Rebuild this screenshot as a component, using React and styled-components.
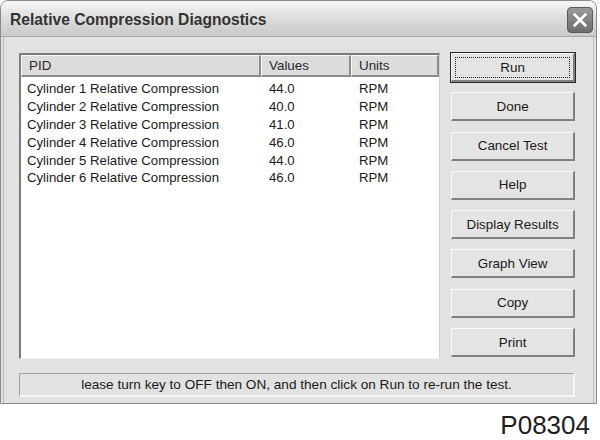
import React from 'react';
import styled, { createGlobalStyle } from 'styled-components';

const GlobalStyle = createGlobalStyle`
  body {
    margin: 0;
    background: #ffffff;
    font-family: "Liberation Sans", Arial, sans-serif;
  }
`;

const Page = styled.div`
  width: 600px;
  height: 440px;
  overflow: hidden;
  display: flex;
  flex-direction: column;
`;

const Window = styled.div`
  width: 597px;
  height: 407px;
  box-sizing: border-box;
  border: 1px solid #8a8a8a;
  border-radius: 8px 8px 0 0;
  background: #e2e2e2;
  display: flex;
  flex-direction: column;
  overflow: hidden;
`;

const TitleBar = styled.div`
  height: 35px;
  flex: none;
  display: flex;
  align-items: center;
  justify-content: space-between;
  padding: 0 3px 0 9px;
  background: linear-gradient(#f7f7f7 0%, #e4e4e4 35%, #d2d2d2 75%, #cacaca 100%);
  border-bottom: 1px solid #a8a8a8;
`;

const Title = styled.div`
  font-size: 15.6px;
  font-weight: bold;
  color: #333;
  margin-top: 3px;
  transform: scaleY(1.08);
`;

const CloseButton = styled.div`
  width: 26px;
  height: 26px;
  box-sizing: border-box;
  border-radius: 4px;
  border: 1px solid #5a5a5a;
  background: linear-gradient(#9a9a9a, #6e6e6e);
  display: flex;
  align-items: center;
  justify-content: center;
  margin-top: 3px;
`;

const Client = styled.div`
  flex: 1;
  display: flex;
  flex-direction: column;
  margin: 0 2px 2px 2px;
  border-left: 1px solid #bdbdbd;
  border-right: 1px solid #bdbdbd;
  padding: 16px 18px 10px 15px;
  gap: 14px;
`;

const MainRow = styled.div`
  display: flex;
  gap: 11px;
`;

const ListBox = styled.div`
  width: 422px;
  height: 306px;
  box-sizing: border-box;
  background: #fff;
  border-top: 2px solid #7c7c7c;
  border-left: 2px solid #7c7c7c;
  border-right: 1px solid #d0d0d0;
  border-bottom: 1px solid #f4f4f4;
  display: flex;
  flex-direction: column;
`;

const cols = '240px 90px 1fr';

const HeaderRow = styled.div`
  display: grid;
  grid-template-columns: ${cols};
  height: 22px;
  flex: none;
`;

const HeaderCell = styled.div`
  box-sizing: border-box;
  background: #dcdcdc;
  border-top: 1px solid #fafafa;
  border-left: 1px solid #fafafa;
  border-right: 2px solid #8c8c8c;
  border-bottom: 2px solid #8c8c8c;
  font-size: 13.4px;
  color: #2a2a2a;
  padding: 2px 0 0 7px;
`;

const Rows = styled.div`
  padding-top: 3px;
`;

const Row = styled.div`
  display: grid;
  grid-template-columns: ${cols};
  height: 17.9px;
  font-size: 13.2px;
  color: #1a1a1a;
  line-height: 17.9px;
`;

const Cell = styled.div`
  padding-left: ${p => p.$pad}px;
  white-space: nowrap;
`;

const ButtonColumn = styled.div`
  width: 124px;
  display: flex;
  flex-direction: column;
  gap: 10.3px;
`;

const Button = styled.div`
  height: 29px;
  box-sizing: border-box;
  background: #e4e4e4;
  border-top: 1px solid #fbfbfb;
  border-left: 1px solid #fbfbfb;
  border-right: 2px solid #808080;
  border-bottom: 2px solid #808080;
  outline: ${p => (p.$default ? '1px solid #2a2a2a' : 'none')};
  outline-offset: 0;
  display: flex;
  align-items: center;
  justify-content: center;
  font-size: 13.4px;
  color: #1a1a1a;
  position: relative;
`;

const FocusRing = styled.span`
  position: absolute;
  inset: 3px 3px 2px 3px;
  border: 1px dotted #222;
`;

const StatusBar = styled.div`
  height: 24px;
  box-sizing: border-box;
  border-top: 1px solid #a0a0a0;
  border-left: 1px solid #a0a0a0;
  border-right: 2px solid #f6f6f6;
  border-bottom: 2px solid #f6f6f6;
  display: flex;
  align-items: center;
  justify-content: center;
  font-size: 13.6px;
  color: #1a1a1a;
  white-space: nowrap;
  overflow: hidden;
`;

const Caption = styled.div`
  align-self: flex-end;
  margin: 6px 10px 0 0;
  font-size: 26px;
  line-height: 30px;
  color: #1e1e1e;
`;

const rows = [
  ['Cylinder 1 Relative Compression', '44.0', 'RPM'],
  ['Cylinder 2 Relative Compression', '40.0', 'RPM'],
  ['Cylinder 3 Relative Compression', '41.0', 'RPM'],
  ['Cylinder 4 Relative Compression', '46.0', 'RPM'],
  ['Cylinder 5 Relative Compression', '44.0', 'RPM'],
  ['Cylinder 6 Relative Compression', '46.0', 'RPM'],
];

const buttons = ['Run', 'Done', 'Cancel Test', 'Help', 'Display Results', 'Graph View', 'Copy', 'Print'];

export default function App() {
  return (
    <Page>
      <GlobalStyle />
      <Window>
        <TitleBar>
          <Title>Relative Compression Diagnostics</Title>
          <CloseButton>
            <svg width="16" height="16" viewBox="0 0 16 16">
              <path d="M2.5 2.5 L13.5 13.5 M13.5 2.5 L2.5 13.5" stroke="#fff" strokeWidth="2.6" strokeLinecap="round" />
            </svg>
          </CloseButton>
        </TitleBar>
        <Client>
          <MainRow>
            <ListBox>
              <HeaderRow>
                <HeaderCell>PID</HeaderCell>
                <HeaderCell>Values</HeaderCell>
                <HeaderCell>Units</HeaderCell>
              </HeaderRow>
              <Rows>
                {rows.map(r => (
                  <Row key={r[0]}>
                    <Cell $pad={6}>{r[0]}</Cell>
                    <Cell $pad={8}>{r[1]}</Cell>
                    <Cell $pad={8}>{r[2]}</Cell>
                  </Row>
                ))}
              </Rows>
            </ListBox>
            <ButtonColumn>
              {buttons.map((b, i) => (
                <Button key={b} $default={i === 0}>
                  {i === 0 && <FocusRing />}
                  {b}
                </Button>
              ))}
            </ButtonColumn>
          </MainRow>
          <StatusBar>lease turn key to OFF then ON, and then click on Run to re-run the test.</StatusBar>
        </Client>
      </Window>
      <Caption>P08304</Caption>
    </Page>
  );
}
